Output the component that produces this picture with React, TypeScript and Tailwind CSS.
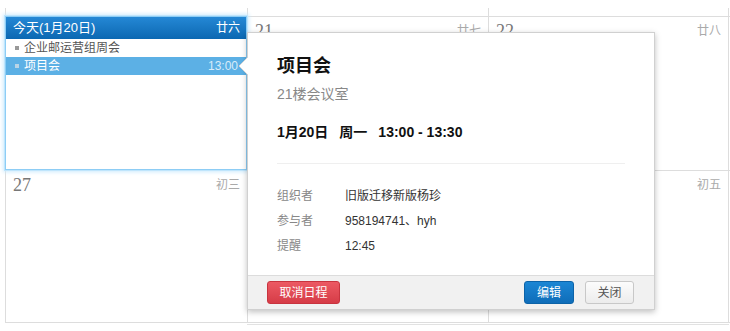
import React from "react";

function Cell({ day, lunar, className = "" }: { day?: string; lunar?: string; className?: string }) {
  return (
    <div className={"border-l border-[#ddd] h-full flex items-start justify-between pl-[7px] pr-[7px] pt-[3px] " + className}>
      <span className="font-['Liberation_Serif',serif] text-[18px] leading-[22px] text-[#777]">{day}</span>
      <span className="text-[12px] leading-[22px] text-[#aaa]">{lunar}</span>
    </div>
  );
}

export default function App() {
  return (
    <div className="relative w-[730px] h-[331px] bg-white overflow-hidden font-['Liberation_Sans','Noto_Sans_CJK_SC',sans-serif]">
      <div className="pl-[5px] pt-[8px]">
        <div className="grid grid-cols-[242px_241px_241px] h-[8px]">
          <div className="border-l border-[#ddd]" />
          <div className="border-l border-[#ddd]" />
          <div className="border-l border-r border-[#ddd]" />
        </div>
        <div className="grid grid-cols-[242px_241px_241px] h-[154px] border-t border-[#ddd]">
          <div className="relative z-[1] h-[154px] -mt-px border border-[#8dcdf5] shadow-[0_0_0_1px_#bfe5fc,0_0_4px_2px_#cdebfd] bg-white">
            <div className="h-[22px] flex items-center justify-between pl-[7px] pr-[6px] bg-gradient-to-b from-[#2488d5] to-[#0b68b2] text-white">
              <span className="text-[13px]">今天(1月20日)</span>
              <span className="text-[12px]">廿六</span>
            </div>
            <div className="h-[18px] flex items-center pl-[9px] text-[12px] text-[#555]">
              <span className="w-[4px] h-[4px] bg-[#999] mr-[5px]" />
              <span>企业邮运营组周会</span>
            </div>
            <div className="h-[18px] flex items-center justify-between pl-[9px] pr-[8px] text-[12px] bg-[#5cb0e5] text-white">
              <div className="flex items-center">
                <span className="w-[4px] h-[4px] bg-[#b9d4e6] mr-[5px]" />
                <span>项目会</span>
              </div>
              <span className="text-[#d8ecf9]">13:00</span>
            </div>
          </div>
          <Cell day="21" lunar="廿七" />
          <Cell day="22" lunar="廿八" className="border-r" />
        </div>
        <div className="grid grid-cols-[242px_241px_241px] h-[153px] border-t border-b border-[#ddd]">
          <Cell day="27" lunar="初三" />
          <Cell day="28" lunar="初四" />
          <Cell day="29" lunar="初五" className="border-r" />
        </div>
        <div className="ml-[242px] w-[482px] h-[2px] border-b border-[#e2e2e2]" />
      </div>

      {/* popover */}
      <div className="absolute left-[247px] top-[32px] w-[408px] h-[278px] z-10 bg-white border border-[#d0d0d0] shadow-[0_2px_6px_rgba(0,0,0,0.25)] flex flex-col">
        <svg className="absolute left-[-10px] top-[24px]" width="11" height="18" viewBox="0 0 11 18">
          <polygon points="10,0 1,9 10,18" fill="#fff" />
          <polyline points="10,0 1,9 10,18" fill="none" stroke="#d6d6d6" strokeWidth="1" />
          <rect x="10" y="0" width="1" height="18" fill="#fff" />
        </svg>
        <div className="flex-1 px-[29px] pt-[21px]">
          <div className="text-[18px] leading-[24px] font-bold text-[#111]">项目会</div>
          <div className="mt-[6px] text-[14px] leading-[20px] text-[#888]">21楼会议室</div>
          <div className="mt-[18px] text-[14px] leading-[20px] font-bold text-[#111] flex gap-[11px]">
            <span>1月20日</span>
            <span>周一</span>
            <span>13:00 - 13:30</span>
          </div>
          <div className="mt-[21px] border-t border-[#efefef]" />
          <div className="mt-[19px] text-[12px]">
            <div className="flex h-[25px] items-center">
              <span className="w-[68px] text-[#888]">组织者</span>
              <span className="text-[#333]">旧版迁移新版杨珍</span>
            </div>
            <div className="flex h-[25px] items-center">
              <span className="w-[68px] text-[#888]">参与者</span>
              <span className="text-[#333]">958194741、hyh</span>
            </div>
            <div className="flex h-[25px] items-center">
              <span className="w-[68px] text-[#888]">提醒</span>
              <span className="text-[#333]">12:45</span>
            </div>
          </div>
        </div>
        <div className="h-[34px] shrink-0 bg-[#f1f1f1] border-t border-[#dcdcdc] flex items-center justify-between pl-[19px] pr-[20px]">
          <button className="w-[73px] h-[23px] rounded-[3px] border border-[#c8343f] bg-gradient-to-b from-[#ec5963] to-[#d63c47] text-white text-[12px] leading-none">取消日程</button>
          <div className="flex gap-[11px]">
            <button className="w-[50px] h-[23px] rounded-[3px] border border-[#0c63a8] bg-gradient-to-b from-[#1b86d4] to-[#0f6db9] text-white text-[12px] leading-none">编辑</button>
            <button className="w-[49px] h-[23px] rounded-[3px] border border-[#c8c8c8] bg-gradient-to-b from-[#fcfcfc] to-[#ececec] text-[#555] text-[12px] leading-none">关闭</button>
          </div>
        </div>
      </div>
    </div>
  );
}
